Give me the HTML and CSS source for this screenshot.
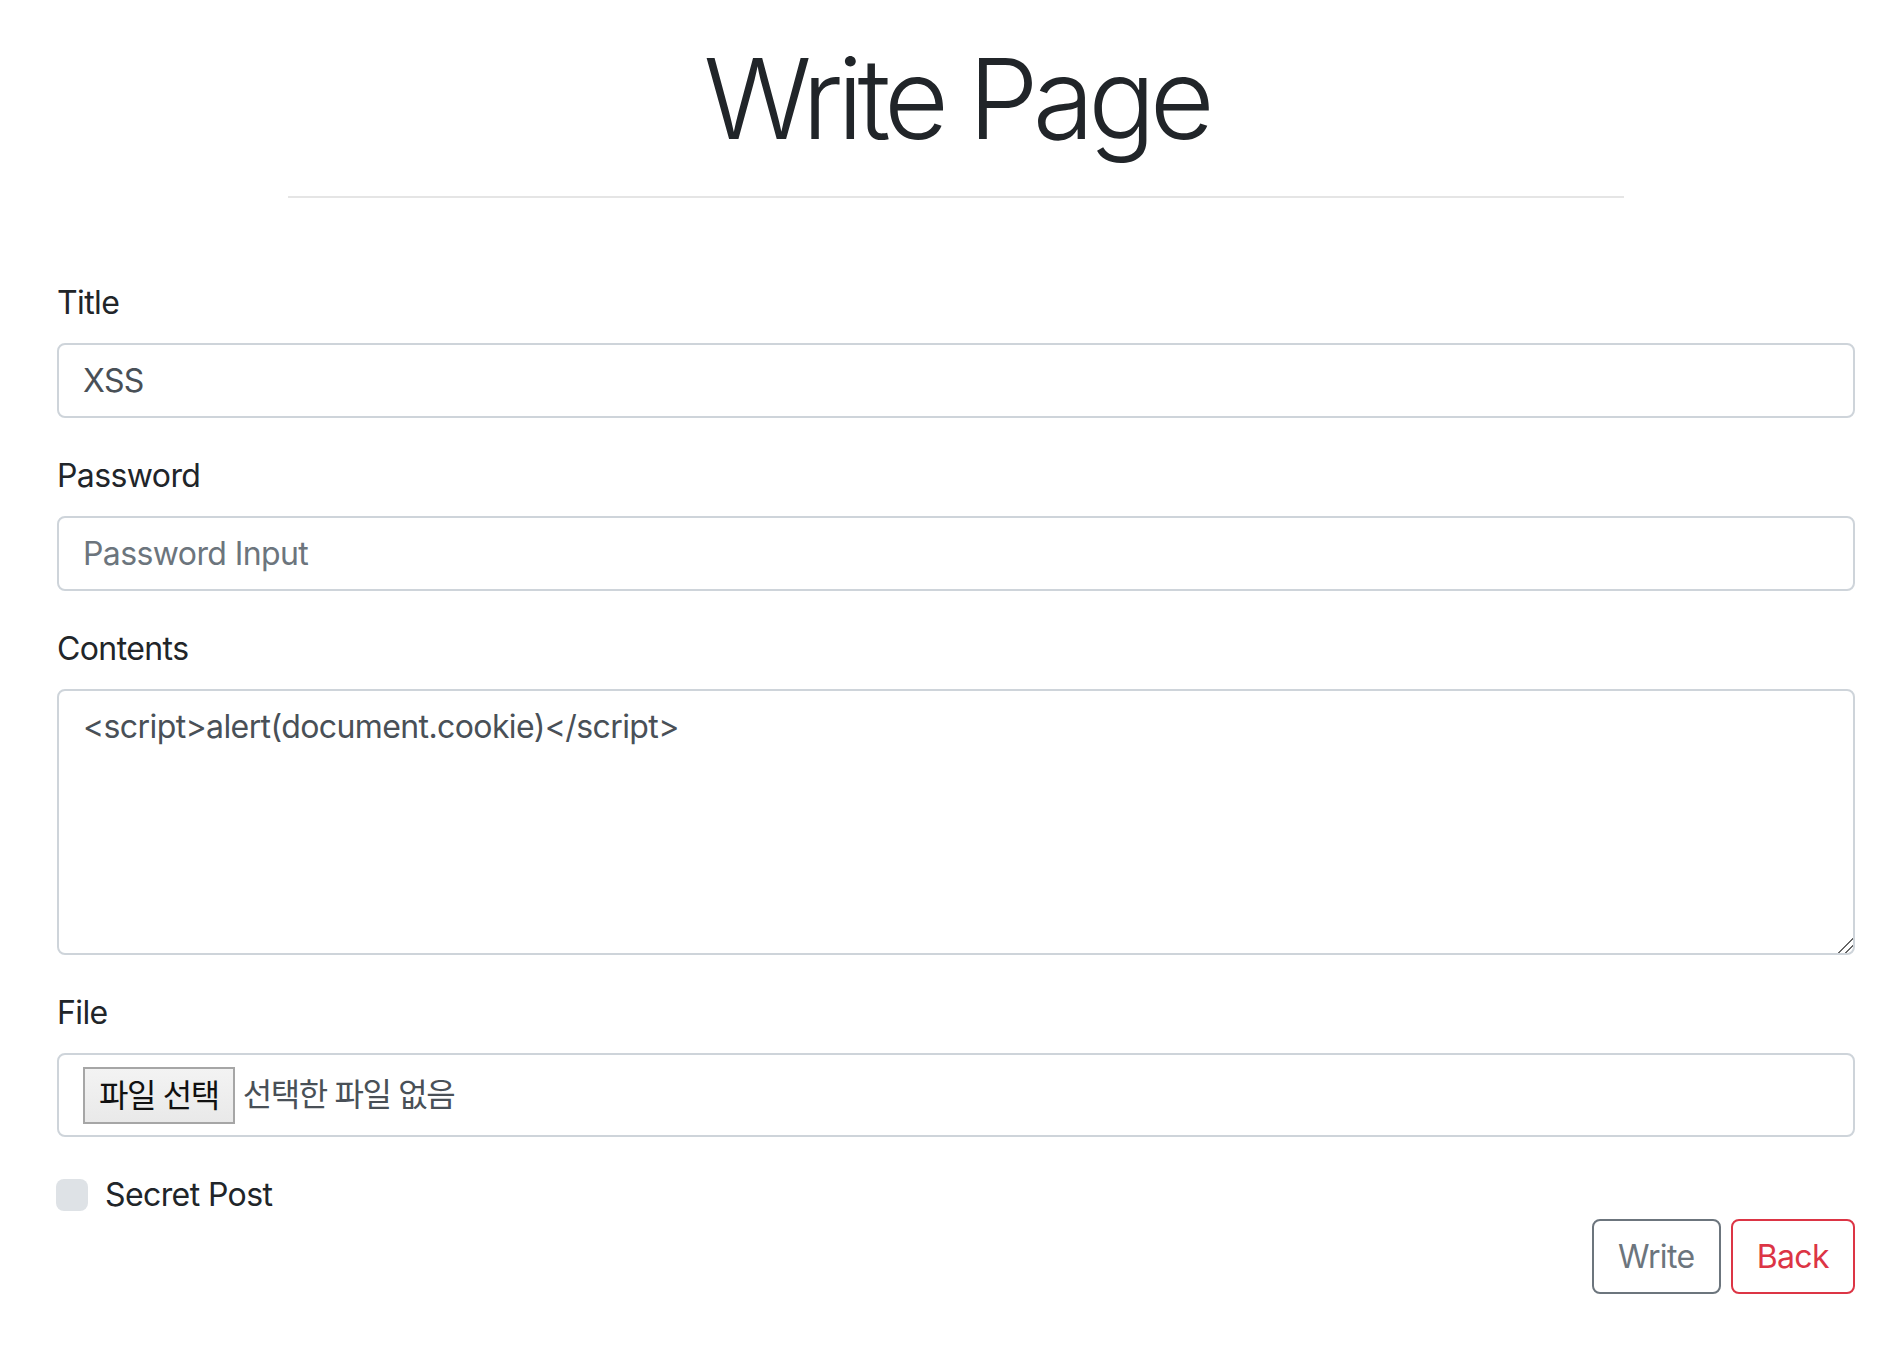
FILE: index.html
```html
<!DOCTYPE html>
<html lang="ko">
<head>
    <meta charset="UTF-8">
    <meta name="viewport" content="width=device-width, initial-scale=1.0">
    <title>Write Page</title>
    <link rel="stylesheet" href="styles.css">
</head>
<body>
    <div class="page">
        <h1 class="page-title">Write Page</h1>
        <hr class="divider">

        <form class="write-form" onsubmit="return false;">
            <div class="form-group">
                <label class="form-label" for="title">Title</label>
                <input type="text" class="form-control" id="title" name="title" value="XSS">
            </div>

            <div class="form-group">
                <label class="form-label" for="password">Password</label>
                <input type="password" class="form-control" id="password" name="password" placeholder="Password Input">
            </div>

            <div class="form-group">
                <label class="form-label" for="contents">Contents</label>
                <textarea class="form-control contents" id="contents" name="contents">&lt;script&gt;alert(document.cookie)&lt;/script&gt;</textarea>
            </div>

            <div class="form-group">
                <label class="form-label" for="file">File</label>
                <label class="form-control file-control" for="file">
                    <span class="file-btn">파일 선택</span>
                    <span class="file-name">선택한 파일 없음</span>
                </label>
                <input type="file" class="file-input" id="file" name="file">
            </div>

            <div class="custom-check">
                <input type="checkbox" class="check-input" id="secret" name="secret">
                <label class="check-label" for="secret">Secret Post</label>
            </div>

            <div class="actions">
                <button type="submit" class="btn btn-outline-secondary">Write</button>
                <button type="button" class="btn btn-outline-danger">Back</button>
            </div>
        </form>
    </div>
</body>
</html>
```

FILE: styles.css
```css
body {
    margin: 0;
    background: #fff;
    color: #212529;
    font-family: Inter, "Noto Sans CJK KR", sans-serif;
    font-size: 32px;
    line-height: 48px;
    letter-spacing: -0.6px;
}

.page {
    width: 1798px;
    margin-left: 57px;
}

.page-title {
    margin: 31px 0 0;
    font-size: 112px;
    font-weight: 300;
    line-height: 134px;
    letter-spacing: -6px;
    text-align: center;
}

.divider {
    width: 1336px;
    height: 0;
    margin: 31px auto 0;
    border: 0;
    border-top: 2px solid rgba(0, 0, 0, 0.1);
}

.write-form {
    margin-top: 81px;
}

.form-group {
    margin-bottom: 34px;
}

.form-label {
    display: block;
    margin-bottom: 16px;
}

.form-control {
    display: block;
    box-sizing: border-box;
    width: 100%;
    height: 75px;
    padding: 12px 24px;
    font-family: inherit;
    font-size: 32px;
    line-height: 48px;
    letter-spacing: inherit;
    color: #495057;
    background: #fff;
    border: 2px solid #ced4da;
    border-radius: 8px;
    outline: none;
}

.form-control::placeholder {
    color: #6c757d;
    opacity: 1;
}

.contents {
    height: 266px;
    resize: vertical;
}

.contents::-webkit-resizer {
    background: linear-gradient(135deg, transparent 0 48%, #666 48% 56%, transparent 56% 70%, #666 70% 78%, transparent 78%);
}

.file-control {
    display: flex;
    align-items: center;
    gap: 8px;
    height: 84px;
    letter-spacing: -1.4px;
    cursor: pointer;
}

.file-btn {
    box-sizing: border-box;
    height: 57px;
    padding: 0 14px;
    line-height: 53px;
    color: #111;
    background: linear-gradient(#f3f3f3, #e9e9e9);
    border: 2px solid #a6a6a6;
}

.file-input {
    display: none;
}

.custom-check {
    position: relative;
    min-height: 48px;
    padding-left: 48px;
}

.check-input {
    position: absolute;
    opacity: 0;
}

.check-label {
    display: block;
}

.check-label::before {
    content: "";
    position: absolute;
    top: 8px;
    left: -1px;
    width: 32px;
    height: 32px;
    background: #dee2e6;
    border-radius: 8px;
}

.check-input:checked + .check-label::before {
    background: #007bff;
}

.actions {
    display: flex;
    justify-content: flex-end;
    gap: 10px;
}

.btn {
    box-sizing: border-box;
    height: 75px;
    padding: 11px 24px;
    font-family: inherit;
    font-size: 32px;
    line-height: 48px;
    letter-spacing: inherit;
    background: transparent;
    border: 2px solid;
    border-radius: 8px;
    cursor: pointer;
}

.btn-outline-secondary {
    color: #6c757d;
    border-color: #6c757d;
}

.btn-outline-danger {
    color: #dc3545;
    border-color: #dc3545;
}
```
